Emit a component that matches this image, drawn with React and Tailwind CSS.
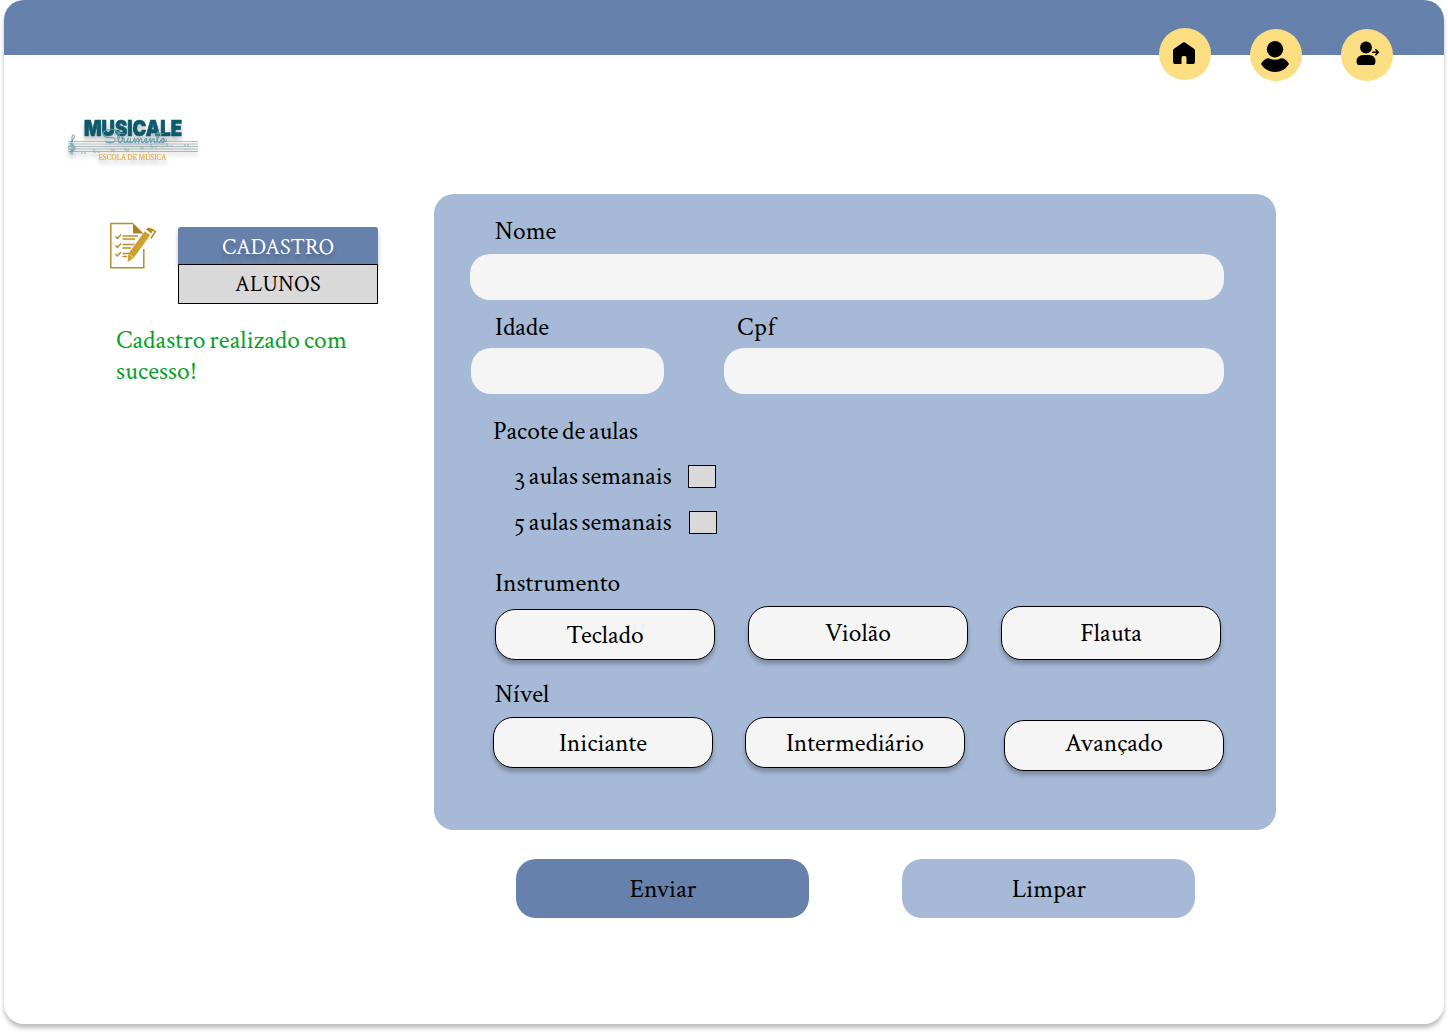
import React from "react";

const label = "block h-8 whitespace-nowrap text-[25.5px] leading-[34px]";

function Choice({ children, className = "" }) {
  return (
    <button
      className={`flex w-[220px] items-center justify-center rounded-[20px] border border-black bg-[#f5f5f5] pt-0.5 text-[25.5px] leading-[32px] shadow-[0_4px_4px_rgba(0,0,0,0.25)] ${className}`}
    >
      {children}
    </button>
  );
}

function Round({ children, className = "" }) {
  return (
    <button className={`flex h-[52px] w-[52px] items-center justify-center rounded-full bg-[#fbde82] ${className}`}>
      {children}
    </button>
  );
}

function Digit({ children }) {
  return <span className="font-['Fanwood_Text','Liberation_Serif',serif] text-[26px] leading-none tracking-[-1px]">{children}</span>;
}

function Logo() {
  return (
    <svg width="134" height="56" viewBox="0 0 134 56" className="block drop-shadow-[0_4px_2px_rgba(0,0,0,0.25)] [word-spacing:0px]">
      <g stroke="#87989c" strokeWidth="0.8" opacity="0.8">
        <path d="M2 26.5H132M2 29H132M2 31.5H132M2 34H132M2 36.5H132" />
      </g>
      <text x="18" y="21" fontFamily="Inter, sans-serif" fontWeight="900" fontSize="22" textLength="98" lengthAdjust="spacingAndGlyphs" fill="#0c5b6c" stroke="#0c5b6c" strokeWidth="0.7">MUSICALE</text>
      <text x="36" y="28" fontFamily="Sacramento, 'Liberation Serif', cursive" fontSize="19" textLength="64" lengthAdjust="spacingAndGlyphs" fill="#5f9bad" stroke="#5f9bad" strokeWidth="0.3">Strumento</text>
      <path d="M7 39c-3 1-4-3-1-3 4 0 4-5 1-6-4-1-6 4-2 5 3 1 4-3 2-3M6 38V22c0-4 4-2 2 1l-4 6" fill="none" stroke="#5f9bad" strokeWidth="0.9" />
      <g stroke="#8fb1bc" strokeWidth="1" fill="none">
        <path d="M15 38h2m1 0h2M28 34v3h2m1 0h3M45 35h4M59 35v-2m0 2h4M74 33h4M85 29v3h3m1 0h2M101 28v3h2m1 0h3M118 30h2m1 0h2" />
      </g>
      <text x="32.5" y="45" fontFamily="'Liberation Serif', serif" fontSize="7.5" textLength="68" lengthAdjust="spacingAndGlyphs" fill="#e0ad35" stroke="#e0ad35" strokeWidth="0.15">ESCOLA DE MÚSICA</text>
    </svg>
  );
}

function FormIcon() {
  return (
    <svg width="48" height="48" viewBox="0 -1 48 48" className="block" fill="none">
      <defs>
        <linearGradient id="gold" x1="0" y1="0" x2="1" y2="1">
          <stop offset="0" stopColor="#a67c21" />
          <stop offset="0.5" stopColor="#d1a42f" />
          <stop offset="1" stopColor="#a37a20" />
        </linearGradient>
      </defs>
      <path d="M24 1.5H1.8V45.7H34.8V27" stroke="#b58d2c" strokeWidth="1.5" />
      <path d="M24 1L34.5 11.5H24Z" fill="#ad8322" />
      <g stroke="#b58d2c" strokeWidth="1.4">
        <path d="M6.5 14.5l2 2 3.5-4M6.5 23.5l2 2 3.5-4M6.5 32l2 2 3.5-4M13.5 14H29M13.5 17H26M13.5 22.5H25M13.5 26H22M13.5 31.5H20M13.5 34.5H18" />
      </g>
      <path d="M19.5 31.5L36 9L41.5 12.8L25 35.5L18.5 40.5Z" fill="url(#gold)" />
      <path d="M37 7.6L39 5.8Q42.5 5.3 43.8 8.5L42.4 11.4Z" fill="#b68a25" />
      <path d="M42.3 7l4 2.5L42 16.5" stroke="#b68a25" strokeWidth="1.5" />
      <path d="M20.5 32.5l3.8 3M36 9.2l5.8 4" stroke="#fff" strokeWidth="0.5" />
    </svg>
  );
}

export default function App() {
  return (
    <div className="h-[1032px] w-[1448px] overflow-hidden bg-white px-1 font-['Crimson_Text','Liberation_Serif',serif] text-black [word-spacing:-2px]">
      <div className="h-[1024px] w-[1440px] rounded-[20px] bg-white shadow-[0_4px_4px_rgba(0,0,0,0.25)]">
        <header className="flex h-[55px] items-start justify-end gap-[39px] rounded-t-[20px] bg-[#6681ac] pr-[51px]">
          <Round className="mt-[28px]">
            <svg width="24" height="24" viewBox="0 0 24 24" className="mb-0.5 mr-0.5">
              <path d="M12 1.3Q12.5 1.3 13 1.6L22 7.7Q23 8.4 23 9.6V21Q23 23 21 23H14.5V17Q14.5 15 12.7 15H11.3Q9.5 15 9.5 17V23H3Q1 23 1 21V9.6Q1 8.4 2 7.7L11 1.6Q11.5 1.3 12 1.3Z" />
            </svg>
          </Round>
          <Round className="mt-[29px]">
            <svg width="30" height="32" viewBox="0 0 30 32" className="mr-0.5 mt-[3px]">
              <circle cx="15" cy="8.3" r="8.2" />
              <path d="M1 23Q4 17.2 9 17.2Q15 20.3 21 17.2Q26 17.2 29 23Q24 31 15 31Q6 31 1 23Z" />
            </svg>
          </Round>
          <Round className="mt-[29px]">
            <svg width="26" height="26" viewBox="0 0 26 26" className="mb-0.5">
              <circle cx="12" cy="6.5" r="5.9" />
              <path d="M2.6 20.5Q2.6 14 9.5 14H15Q21.4 14 21.4 20.5Q21.4 24 19 24H5Q2.6 24 2.6 20.5Z" />
              <path d="M18.8 11.2H24M21.8 8.7L24.3 11.2L21.8 13.7" fill="none" stroke="black" strokeWidth="1.6" strokeLinecap="round" strokeLinejoin="round" />
            </svg>
          </Round>
        </header>

        <div className="flex">
          <aside className="w-[430px] shrink-0">
            <div className="pl-[62px] pt-[60px]">
              <Logo />
            </div>
            <div className="mt-[50px] flex pl-[105px]">
              <FormIcon />
              <nav className="ml-[21px] mt-[6px] w-[200px] text-center text-[22px] leading-[37px]">
                <div className="h-[37px] rounded-t-[3px] bg-[#6681ac] pt-0.5 text-white shadow-[0_4px_4px_rgba(0,0,0,0.25)] [text-shadow:0_4px_4px_rgba(0,0,0,0.25)]">CADASTRO</div>
                <div className="relative h-10 border border-black bg-[#d9d9d9] pt-px tracking-[0.3px]">ALUNOS</div>
              </nav>
            </div>
            <p className="ml-[112px] mt-[21px] text-[25.5px] leading-[31px] tracking-[0.1px] text-[#07a128]">
              Cadastro realizado com<br />sucesso!
            </p>
          </aside>

          <main>
            <form className="mt-[139px] h-[636px] w-[842px] rounded-[20px] bg-[#a6b9d6] pt-[21px]" onSubmit={(e) => e.preventDefault()}>
              <label className={`${label} ml-[61px]`}>Nome</label>
              <div className="ml-9 mt-[7px] h-[46px] w-[754px] rounded-[20px] bg-[#f5f5f5]" />

              <div className="mt-[11px] flex">
                <div className="w-[290px] pl-[37px]">
                  <label className={`${label} ml-6`}>Idade</label>
                  <div className="mt-[5px] h-[46px] w-[193px] rounded-[20px] bg-[#f5f5f5]" />
                </div>
                <div>
                  <label className={`${label} ml-[13px] tracking-[0.8px]`}>Cpf</label>
                  <div className="mt-[5px] h-[46px] w-[500px] rounded-[20px] bg-[#f5f5f5]" />
                </div>
              </div>

              <p className={`${label} ml-[59px] mt-[21px]`}>Pacote de aulas</p>
              <div className="ml-[79px] mt-[13px] flex">
                <label className={`${label} w-[175px]`}><Digit>3</Digit> aulas semanais</label>
                <span className="mt-[5px] h-[23px] w-7 border border-black bg-[#d9d9d9]" />
              </div>
              <div className="ml-[79px] mt-[14px] flex">
                <label className={`${label} w-[176px]`}><Digit>5</Digit> aulas semanais</label>
                <span className="mt-[5px] h-[23px] w-7 border border-black bg-[#d9d9d9]" />
              </div>

              <p className={`${label} ml-[61px] mt-[29px]`}>Instrumento</p>
              <div className="ml-[61px] mt-[7px] flex items-end gap-[33px]">
                <Choice className="h-[51px]">Teclado</Choice>
                <Choice className="h-[54px]">Violão</Choice>
                <Choice className="h-[54px]">Flauta</Choice>
              </div>

              <p className={`${label} ml-[61px] mt-[18px]`}>Nível</p>
              <div className="ml-[59px] mt-[7px] flex items-start">
                <Choice className="h-[51px]">Iniciante</Choice>
                <Choice className="ml-8 h-[51px] tracking-[-0.1px]">Intermediário</Choice>
                <Choice className="ml-[39px] mt-[3px] h-[51px] pb-[5px]">Avançado</Choice>
              </div>
            </form>
            <div className="ml-[82px] mt-[29px] flex gap-[93px] text-[25.5px]">
              <button className="h-[59px] w-[293px] rounded-[20px] bg-[#6681ac] pl-px pt-[3px]">Enviar</button>
              <button className="h-[59px] w-[293px] rounded-[20px] bg-[#a6b9d6] pl-px pt-[3px]">Limpar</button>
            </div>
          </main>
        </div>
      </div>
    </div>
  );
}
